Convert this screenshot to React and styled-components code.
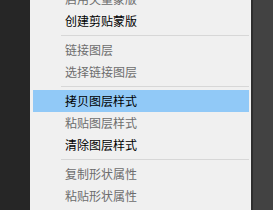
import React from "react";
import styled, { createGlobalStyle } from "styled-components";

const GlobalStyle = createGlobalStyle`
    html, body {
        margin: 0;
        padding: 0;
        background: #3f3f3f;
    }
    #root {
        height: 210px;
    }
`;

const Screen = styled.div`
    display: flex;
    flex-direction: row;
    width: 273px;
    height: 210px;
    overflow: hidden;
`;

const LeftPane = styled.div`
    width: 30px;
    background-color: #262626;
`;

const RightPane = styled.div`
    flex: 1;
    background-color: #424242;
    border-left: 2px solid #2e2e2e;
`;

const Menu = styled.div`
    width: 221px;
    background-color: #f0f0f0;
    overflow: hidden;
    font-family: "Noto Sans CJK SC", "Noto Sans", sans-serif;
    font-size: 12px;
`;

const List = styled.div`
    display: flex;
    flex-direction: column;
    margin-top: -12px;
`;

const Item = styled.div`
    height: 22px;
    line-height: 22px;
    margin: 0 2px 0 3px;
    padding-left: 32px;
    color: ${props => (props.disabled ? "#6d6d6d" : "#000000")};
    background-color: ${props => (props.active ? "#91c9f7" : "transparent")};
    white-space: nowrap;
`;

const Separator = styled.div`
    height: 7px;
    display: flex;
    align-items: center;
    padding: 0 2px 0 31px;

    &::after {
        content: "";
        flex: 1;
        height: 1px;
        background-color: #d7d7d7;
    }
`;

const menu = [
    { label: "启用矢量蒙版", disabled: true },
    { label: "创建剪贴蒙版" },
    { sep: true },
    { label: "链接图层", disabled: true },
    { label: "选择链接图层", disabled: true },
    { sep: true },
    { label: "拷贝图层样式", active: true },
    { label: "粘贴图层样式", disabled: true },
    { label: "清除图层样式" },
    { sep: true },
    { label: "复制形状属性", disabled: true },
    { label: "粘贴形状属性", disabled: true },
];

const App = () => {
    return (
        <>
            <GlobalStyle />
            <Screen>
                <LeftPane />
                <Menu>
                    <List>
                        {menu.map((m, i) =>
                            m.sep ? (
                                <Separator key={i} />
                            ) : (
                                <Item key={i} disabled={m.disabled} active={m.active}>
                                    {m.label}
                                </Item>
                            )
                        )}
                    </List>
                </Menu>
                <RightPane />
            </Screen>
        </>
    );
};

export default App;
